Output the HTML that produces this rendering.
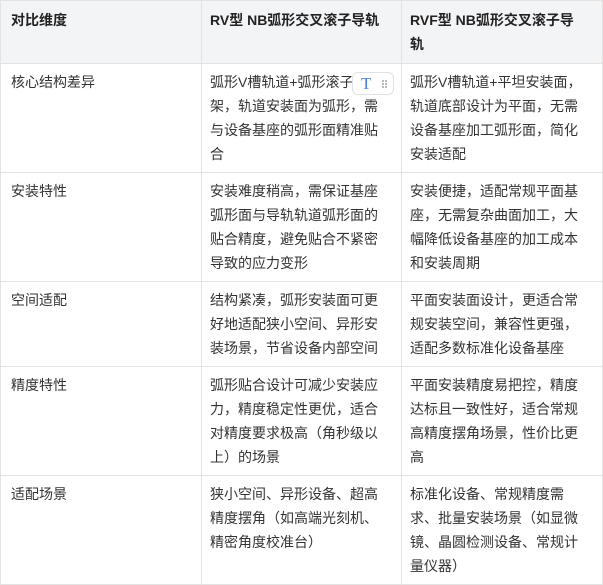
<!DOCTYPE html>
<html><head><meta charset="utf-8"><style>
body{margin:0;background:#fff;font-family:"Liberation Sans","Noto Sans CJK SC",sans-serif;font-size:14px;color:#333;}
table{border-collapse:collapse;table-layout:fixed;width:602px;position:absolute;left:0;top:0;}
td,th{border:1px solid #e3e3e3;vertical-align:top;text-align:left;line-height:24px;padding:6px 12px 6px 8px;}
th{background:#f3f4f6;font-weight:bold;padding-top:7px;padding-bottom:7px;color:#222}
td:first-child,th:first-child{padding-left:10px}
.ic{position:absolute;left:352px;top:72px;width:42px;height:23px;border:1px solid #e2e2e2;border-radius:6px;background:#fff;box-sizing:border-box}
.ic span{position:absolute;left:8px;top:0;color:#4a7ee8;font-family:"Liberation Serif",serif;font-size:17px;line-height:22px}
.ic i{position:absolute;left:29px;top:7px;width:1.5px;height:1.5px;background:#bbb;box-shadow:3px 0 #bbb,0 3px #bbb,3px 3px #bbb,0 6px #bbb,3px 6px #bbb}
</style></head><body>
<table>
<colgroup><col style="width:201px"><col style="width:200px"><col style="width:201px"></colgroup>
<tr><th>对比维度</th><th>RV型 NB弧形交叉滚子导轨</th><th>RVF型 NB弧形交叉滚子导<br>轨</th></tr>
<tr><td>核心结构差异</td><td>弧形V槽轨道+弧形滚子保持架，轨道安装面为弧形，需与设备基座的弧形面精准贴合</td><td>弧形V槽轨道+平坦安装面，轨道底部设计为平面，无需设备基座加工弧形面，简化安装适配</td></tr>
<tr><td>安装特性</td><td>安装难度稍高，需保证基座弧形面与导轨轨道弧形面的贴合精度，避免贴合不紧密导致的应力变形</td><td>安装便捷，适配常规平面基座，无需复杂曲面加工，大幅降低设备基座的加工成本和安装周期</td></tr>
<tr><td>空间适配</td><td>结构紧凑，弧形安装面可更好地适配狭小空间、异形安装场景，节省设备内部空间</td><td>平面安装面设计，更适合常规安装空间，兼容性更强，适配多数标准化设备基座</td></tr>
<tr><td>精度特性</td><td>弧形贴合设计可减少安装应力，精度稳定性更优，适合对精度要求极高（角秒级以上）的场景</td><td>平面安装精度易把控，精度达标且一致性好，适合常规高精度摆角场景，性价比更高</td></tr>
<tr><td>适配场景</td><td>狭小空间、异形设备、超高精度摆角（如高端光刻机、精密角度校准台）</td><td>标准化设备、常规精度需求、批量安装场景（如显微镜、晶圆检测设备、常规计量仪器）</td></tr>
</table>
<div class="ic"><span>T</span><i></i></div>
</body></html>
